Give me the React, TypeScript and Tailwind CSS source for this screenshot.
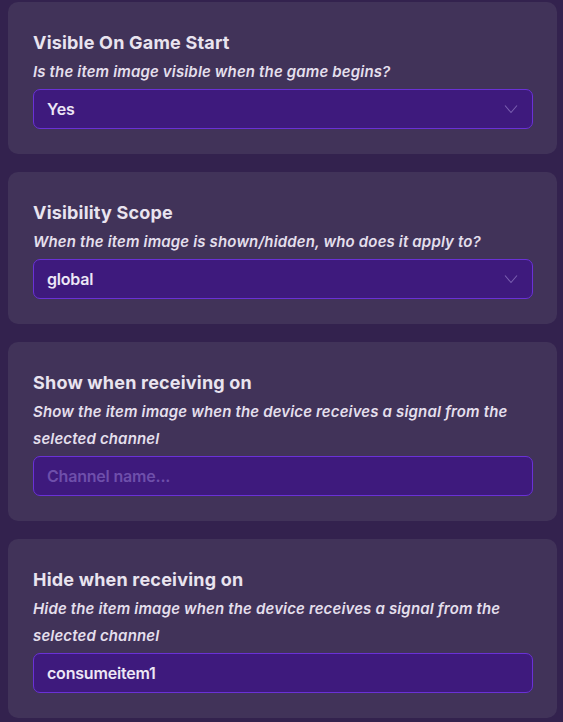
import React from 'react';

const ChevronDown = () => (
  <svg className="h-[14px] w-[14px] text-[#7a5fb0]" viewBox="0 0 14 14" fill="none" stroke="currentColor" strokeWidth={1.1}>
    <path d="M1 3.5l6 7 6-7" />
  </svg>
);

type FieldProps = {
  title: string;
  desc: string;
  kind: 'select' | 'input';
  value?: string;
  placeholder?: string;
};

const Field: React.FC<FieldProps> = ({ title, desc, kind, value, placeholder }) => (
  <div className="rounded-[10px] bg-[#413359] pl-[25px] pr-[24px] pt-[29px] pb-[25px]">
    <h2 className="text-[18px] font-bold leading-[24px] text-[#e9e4ef] tracking-[0.2px]">{title}</h2>
    <p className="mt-[3px] text-[15px] italic font-semibold leading-[27px] text-[#e4dfec] tracking-[0.15px] pr-2">{desc}</p>
    <div className="mt-[4px] h-[40px] rounded-[7px] border border-[#6a31d6] bg-[#3e1a7d] flex items-center justify-between pl-[13px] pr-[14px]">
      {kind === 'select' ? (
        <>
          <span className="text-[16px] font-semibold text-[#ece6f5] tracking-[-0.2px]">{value}</span>
          <ChevronDown />
        </>
      ) : value ? (
        <span className="text-[16px] font-semibold text-[#ece6f5] tracking-[-0.2px]">{value}</span>
      ) : (
        <span className="text-[16px] font-semibold text-[#6e4fab] tracking-[-0.2px]">{placeholder}</span>
      )}
    </div>
  </div>
);

const App: React.FC = () => {
  return (
    <div className="min-h-screen w-full bg-[#33224e] pl-2 pr-[6px] pt-[2px] pb-2" style={{ fontFamily: 'Inter, "Noto Sans", sans-serif' }}>
      <div className="flex flex-col gap-[18px]">
        <Field
          title="Visible On Game Start"
          desc="Is the item image visible when the game begins?"
          kind="select"
          value="Yes"
        />
        <Field
          title="Visibility Scope"
          desc="When the item image is shown/hidden, who does it apply to?"
          kind="select"
          value="global"
        />
        <Field
          title="Show when receiving on"
          desc="Show the item image when the device receives a signal from the selected channel"
          kind="input"
          placeholder="Channel name..."
        />
        <Field
          title="Hide when receiving on"
          desc="Hide the item image when the device receives a signal from the selected channel"
          kind="input"
          value="consumeitem1"
        />
      </div>
    </div>
  );
};

export default App;
